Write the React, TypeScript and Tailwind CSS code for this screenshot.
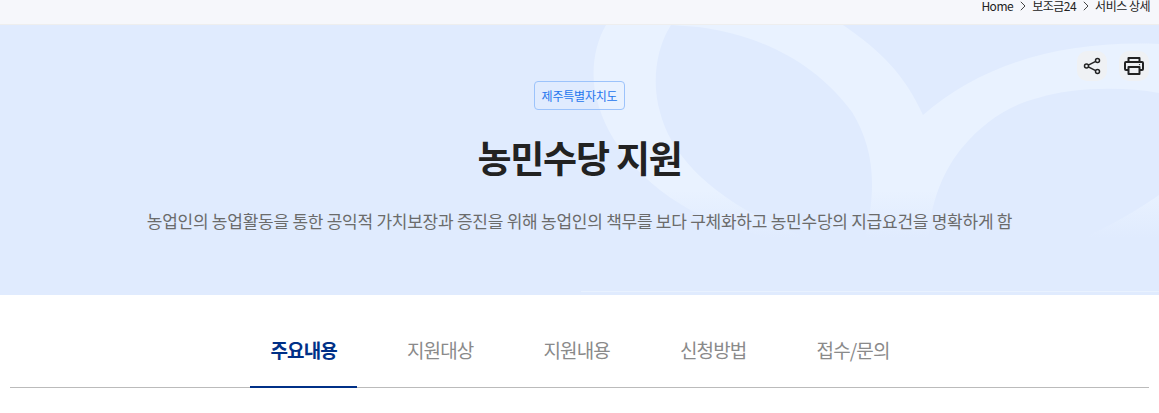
const tabs = ['주요내용', '지원대상', '지원내용', '신청방법', '접수/문의'];

function Chevron() {
  return (
    <svg width="6" height="10" viewBox="0 0 6 10" fill="none" stroke="#444" strokeWidth="1" className="ml-[1px] mt-[1px]">
      <path d="M0.8 0.8 5 5 0.8 9.2" />
    </svg>
  );
}

function ShareIcon() {
  return (
    <svg width="18" height="18" viewBox="0 0 18 18" fill="none" stroke="#222" strokeWidth="1.5">
      <circle cx="14.5" cy="3.5" r="2" />
      <circle cx="3.5" cy="9" r="2" />
      <circle cx="14.5" cy="14.5" r="2" />
      <path d="M5.3 8.1 12.7 4.4M5.3 9.9 12.7 13.6" />
    </svg>
  );
}

function PrintIcon() {
  return (
    <svg width="20" height="18" viewBox="0 0 20 18" fill="none" stroke="#222" strokeWidth="2" strokeLinejoin="round">
      <path d="M4.5 5V1h11v4" />
      <path d="M4.5 13H2a1 1 0 0 1-1-1V6a1 1 0 0 1 1-1h16a1 1 0 0 1 1 1v6a1 1 0 0 1-1 1h-2.5" />
      <path d="M4.5 10h11v7h-11z" />
      <circle cx="15.5" cy="7.6" r="0.7" fill="#222" stroke="none" />
    </svg>
  );
}

// the pale heart shape behind the hero, fades out near the bottom
function HeroShape() {
  return (
    <svg className="absolute left-0 top-0" width="1159" height="270" viewBox="0 25 1159 270">
      <defs>
        <linearGradient id="band" gradientUnits="userSpaceOnUse" x1="0" y1="190" x2="0" y2="238">
          <stop offset="0" stopColor="#e9f2ff" />
          <stop offset="1" stopColor="#e0ebfe" />
        </linearGradient>
      </defs>
      <path
        d="M606 25C594 45 590 75 597 100C607 140 640 185 700 215L800 250H1159V44C1060 40 980 65 923 115C905 75 880 50 843 25Z"
        fill="url(#band)"
      />
      <path
        d="M671 25C655 50 652 85 660 112C672 160 720 205 800 235V250H862C878 190 875 150 852 112C815 62 760 35 698 27Z"
        fill="#e0ebfe"
      />
      <path
        d="M929 250C927 213 940 175 961 149C985 120 1010 105 1038 98C1070 88 1120 86 1159 93V195C1130 215 1110 225 1090 235L1075 250Z"
        fill="#e0ebfe"
      />
      <path d="M581 291.5H1159" stroke="#e9f2ff" strokeWidth="1" />
    </svg>
  );
}

export default function App() {
  return (
    <div className="h-[413px] overflow-hidden bg-white font-['Noto_Sans_CJK_KR','Noto_Sans',sans-serif]">
      <div className="flex h-[25px] items-start justify-end gap-[6px] border-b border-[#eeeeee] bg-[#f6f7fb] pr-[9px] text-[12px] leading-[11px] tracking-[-0.5px] text-[#222]">
        <span>Home</span>
        <Chevron />
        <span>보조금24</span>
        <Chevron />
        <span>서비스 상세</span>
      </div>

      <section className="relative h-[270px] overflow-hidden bg-[#e0ebfe]">
        <HeroShape />

        <div className="absolute right-[10px] top-[26px] flex gap-[12px]">
          <button className="flex h-[30px] w-[30px] items-center justify-center rounded-[10px] bg-[#eff1f4]">
            <ShareIcon />
          </button>
          <button className="flex h-[30px] w-[30px] items-center justify-center rounded-[10px] bg-[#eff1f4]">
            <PrintIcon />
          </button>
        </div>

        <div className="relative flex flex-col items-center pt-[56px]">
          <span className="flex h-[29px] items-center rounded border border-[#9cc3fb] px-[7px] text-[12px] tracking-[-0.2px] text-[#2476ee]">
            제주특별자치도
          </span>
          <h1 className="mt-[19px] text-[37px] font-bold leading-[56px] tracking-[-1.2px] text-[#222]">농민수당 지원</h1>
          <p className="mt-[23px] text-[17px] leading-[26px] tracking-[-0.25px] text-[#6b6b6b]">
            농업인의 농업활동을 통한 공익적 가치보장과 증진을 위해 농업인의 책무를 보다 구체화하고 농민수당의 지급요건을 명확하게 함
          </p>
        </div>
      </section>

      <nav className="mx-[10px] mt-[21px] flex h-[72px] justify-center gap-[30px] border-b border-[#bbbbbb] pl-[1px]">
        {tabs.map((tab, i) => (
          <div
            key={tab}
            className={
              i === 0
                ? 'mb-[-1px] border-b-2 border-[#003087] px-[20px] pt-[20px] text-[19px] font-bold tracking-[-0.85px] text-[#003087]'
                : 'px-[20px] pt-[20px] text-[19px] tracking-[-0.85px] text-[#8a8a8a]'
            }
          >
            {tab}
          </div>
        ))}
      </nav>
    </div>
  );
}
